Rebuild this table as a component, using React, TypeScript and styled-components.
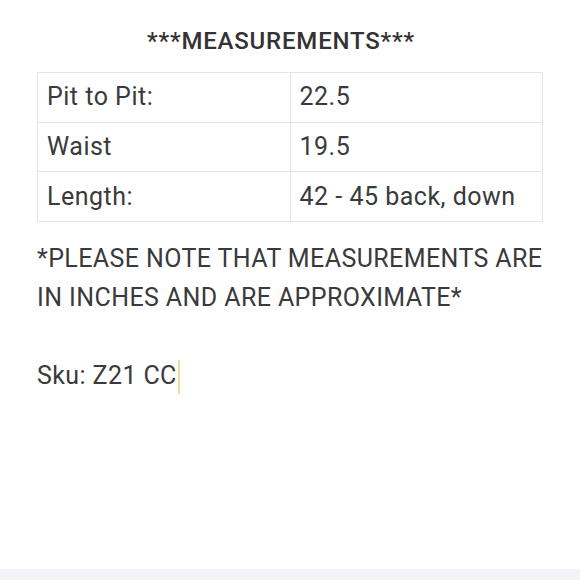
import styled, { createGlobalStyle } from "styled-components";

const GlobalStyle = createGlobalStyle`
  html, body {
    margin: 0;
    padding: 0;
    background: #ffffff;
  }
  body {
    font-family: Roboto, "Liberation Sans", Arial, sans-serif;
    color: #3a3a3c;
  }
`;

// 전체 페이지
const Page = styled.div`
  display: flex;
  flex-direction: column;
  min-height: 100vh;
  box-sizing: border-box;
`;

const Content = styled.div`
  padding: 0 37px;
  display: flex;
  flex-direction: column;
`;

const Title = styled.h1`
  margin: 27px 18px 0 0;
  font-size: 24px;
  line-height: 28px;
  font-weight: 500;
  letter-spacing: 0.8px;
  text-align: center;
  color: #333335;
`;

const Table = styled.table`
  margin-top: 17px;
  width: 506px;
  border-collapse: collapse;
`;

const Cell = styled.td`
  height: 49.7px;
  padding: 0 0 0 9px;
  border: 1px solid #e4e4e4;
  font-size: 25px;
  line-height: 30px;
  letter-spacing: 0.5px;
  width: 50%;
  vertical-align: middle;
  box-sizing: border-box;
`;

const Note = styled.p`
  margin: 17px 0 0;
  font-size: 25px;
  line-height: 39px;
  letter-spacing: 0.4px;
  white-space: nowrap;
`;

const Caret = styled.span`
  display: inline-block;
  width: 2px;
  height: 34px;
  margin-left: 1px;
  background: #f1dc9c;
  vertical-align: middle;
`;

const BottomBar = styled.div`
  margin-top: auto;
  height: 11px;
  background: #f2f2f7;
`;

const rows = [
  { label: "Pit to Pit:", value: "22.5" },
  { label: "Waist", value: "19.5" },
  { label: "Length:", value: "42 - 45 back, down" },
];

export default function App() {
  return (
    <>
      <GlobalStyle />
      <Page>
        <Content>
          <Title>***MEASUREMENTS***</Title>
          <Table>
            <tbody>
              {rows.map((row) => (
                <tr key={row.label}>
                  <Cell>{row.label}</Cell>
                  <Cell>{row.value}</Cell>
                </tr>
              ))}
            </tbody>
          </Table>
          <Note>
            *PLEASE NOTE THAT MEASUREMENTS ARE
            <br />
            IN INCHES AND ARE APPROXIMATE*
            <br />
            <br />
            Sku: Z21 CC
            <Caret />
          </Note>
        </Content>
        <BottomBar />
      </Page>
    </>
  );
}
